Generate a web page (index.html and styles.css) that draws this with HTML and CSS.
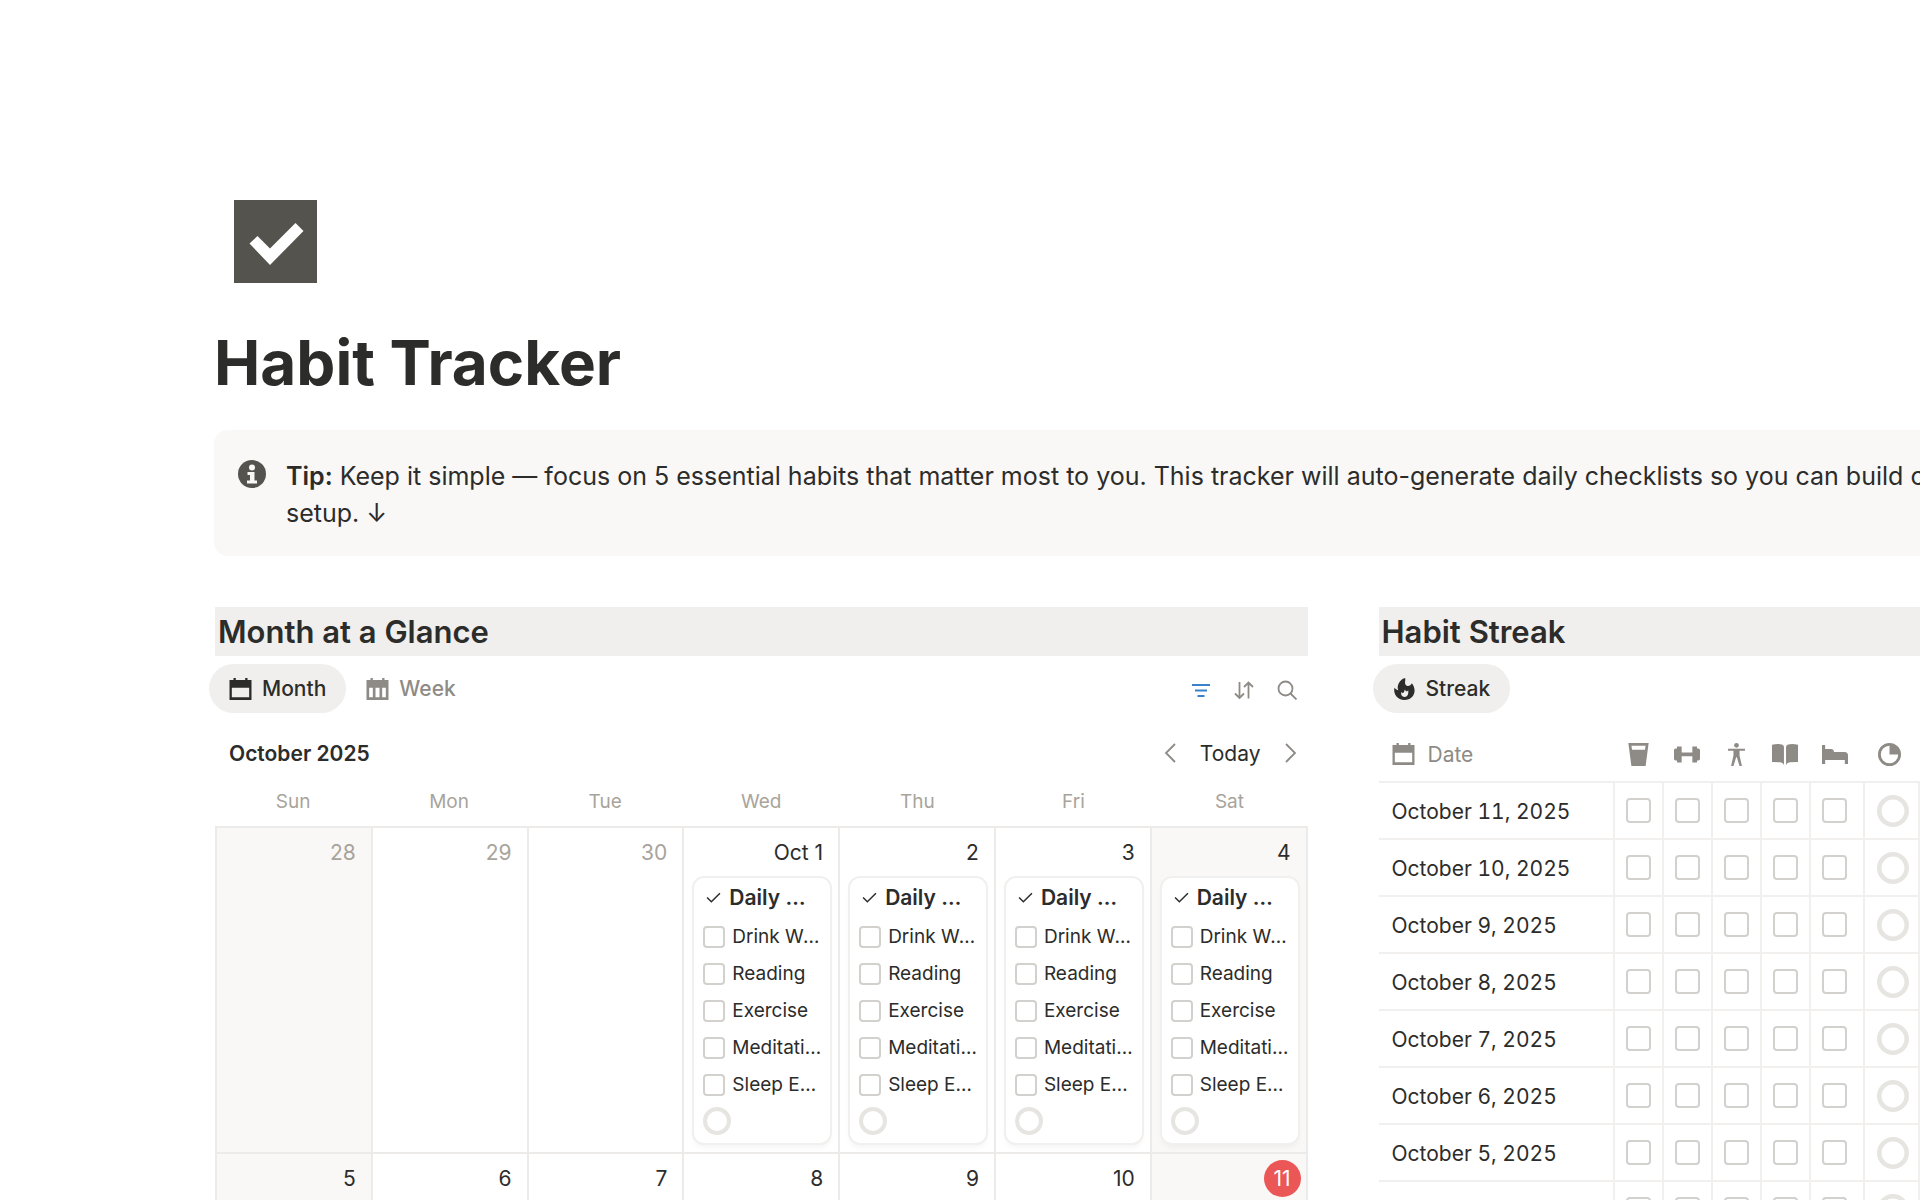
FILE: index.html
```html
<!DOCTYPE html>
<html lang="en">
<head>
    <meta charset="UTF-8">
    <meta name="viewport" content="width=device-width, initial-scale=1.0">
    <title>Habit Tracker</title>
    <link rel="stylesheet" href="styles.css">
</head>
<body>
<svg class="sprite" aria-hidden="true">
    <symbol id="i-month" viewBox="0 0 66 66">
        <path fill-rule="evenodd" d="M12 0h7v6h28V0h7v6h12v60H0V6h12zM7 29v29h52V29z"/>
    </symbol>
    <symbol id="i-week" viewBox="0 0 66 66">
        <path fill-rule="evenodd" d="M12 0h7v6h28V0h7v6h12v60H0V6h12zM8 29v29h11V29zM27 29v29h12V29zM47 29v29h11V29z"/>
    </symbol>
    <symbol id="i-fire" viewBox="0 0 68 72">
        <path fill-rule="evenodd" d="M36 0C24 3 14 14 12 28C11 33 12 37 14 40C9 39 6 37 1 32C-1 42 1 52 7 60C13 68 23 72 34 72C53 72 67 59 67 41C67 31 63 24 58 17C56 22 51 26 45 26C40 26 37 23 36 18C35 12 38 6 36 0zM36 38C37 43 39 45 43 43C44 42 45 41 46 40C48 52 44 62 34 62C26 62 21 55 24 46C27 50 30 50 32 47C34 44 33 40 36 38z"/>
    </symbol>
    <symbol id="i-cup" viewBox="0 0 60 68">
        <path fill-rule="evenodd" d="M0 0h60l-9 68H9zM9 8l2 12h38l2-12z"/>
    </symbol>
    <symbol id="i-dumbbell" viewBox="0 0 78 52">
        <path d="M9 2h14v18h32V2h14v6h4a5 5 0 0 1 5 5v26a5 5 0 0 1-5 5h-4v6H55V31H23v19H9v-6H5a5 5 0 0 1-5-5V13a5 5 0 0 1 5-5h4z"/>
    </symbol>
    <symbol id="i-person" viewBox="0 0 50 68">
        <circle cx="25" cy="7" r="7"/>
        <path d="M0 17h50v6H34v14l7 31h-7l-8-26h-2l-8 26H9l7-31V23H0z"/>
    </symbol>
    <symbol id="i-book" viewBox="0 0 74 60">
        <path d="M0 2Q18-2 30 2Q34 4 34 8V60Q32 54 24 52L0 51zM74 2Q56-2 44 2Q40 4 40 8V60Q42 54 50 52L74 51z"/>
    </symbol>
    <symbol id="i-bed" viewBox="0 0 74 54">
        <path d="M0 0h9v11h16q9 0 9 9h30q10 0 10 10v24h-9V43H9v11H0z"/>
    </symbol>
    <symbol id="i-pie" viewBox="0 0 66 66">
        <path fill-rule="evenodd" d="M33 0a33 33 0 1 0 0 66a33 33 0 0 0 0-66zM33 8v25h25a25 25 0 1 1-25-25z"/>
    </symbol>
    <symbol id="i-check" viewBox="0 0 14 10">
        <path d="M1 5l4 4 8-8" fill="none" stroke="currentColor" stroke-width="1.4"/>
    </symbol>
    <symbol id="i-ring" viewBox="0 0 28 28">
        <circle cx="14" cy="14" r="12" fill="none" stroke="currentColor" stroke-width="4"/>
    </symbol>
</svg>

<main class="page">
    <svg class="page-icon" viewBox="0 0 83 83">
        <path fill="#55534d" d="M0 0h83v83H0z"/>
        <path fill="#fff" d="M15.500 43.500L23.500 36L36 48.500L61.500 23L69.500 31L36 65z"/>
    </svg>
    <h1 class="page-title">Habit Tracker</h1>

    <div class="callout">
        <svg class="callout-icon" viewBox="0 0 28 28">
            <circle cx="14" cy="14" r="14" fill="#55534d"/>
            <circle cx="14" cy="7.500" r="3" fill="#f9f8f7"/>
            <path fill="#f9f8f7" d="M9.500 12h7v8.500h2.500v3H9v-3h3V15H9.500z"/>
        </svg>
        <p class="callout-text"><strong>Tip:</strong> Keep it simple — focus on 5 essential habits that matter most to you. This tracker will auto-generate daily checklists so you can build consistency without overwhelm or complex setup. ↓</p>
    </div>

    <div class="columns">
        <section>
            <h2 class="section-title">Month at a Glance</h2>
            <div class="view-bar">
                <button type="button" class="tab active"><svg class="tab-icon"><use href="#i-month"/></svg>Month</button>
                <button type="button" class="tab"><svg class="tab-icon"><use href="#i-week"/></svg>Week</button>
                <div class="tools">
                    <button type="button" class="icon-btn filter" aria-label="Filter">
                        <svg viewBox="0 0 20 20"><path d="M1 5h18M4 10.500h12M6.500 16h7" stroke-width="2"/></svg>
                    </button>
                    <button type="button" class="icon-btn" aria-label="Sort">
                        <svg viewBox="0 0 20 20"><path d="M5.500 2v16M1 13.500l4.500 4.500 4.500-4.500M14.500 18.500V2.500M10 7l4.500-4.500L19 7"/></svg>
                    </button>
                    <button type="button" class="icon-btn" aria-label="Search">
                        <svg viewBox="0 0 20 20"><circle cx="8.500" cy="8.500" r="7"/><path d="M13.500 13.500l6 6"/></svg>
                    </button>
                </div>
            </div>

            <div class="month-bar">
                <span class="month-name">October 2025</span>
                <button type="button" class="icon-btn" aria-label="Previous month">
                    <svg viewBox="0 0 20 20"><path d="M15 1L6 10l9 9"/></svg>
                </button>
                <button type="button" class="today-btn">Today</button>
                <button type="button" class="icon-btn" aria-label="Next month">
                    <svg viewBox="0 0 20 20"><path d="M5 1l9 9-9 9"/></svg>
                </button>
            </div>
            <div class="weekdays">
                <span>Sun</span><span>Mon</span><span>Tue</span><span>Wed</span><span>Thu</span><span>Fri</span><span>Sat</span>
            </div>
            <div class="calendar" id="calendar"></div>
        </section>

        <section>
            <h2 class="section-title">Habit Streak</h2>
            <div class="view-bar">
                <button type="button" class="tab active"><svg class="tab-icon"><use href="#i-fire"/></svg>Streak</button>
            </div>
            <table class="streak">
                <thead>
                <tr>
                    <th class="date-col"><span class="date-head"><svg class="tab-icon"><use href="#i-month"/></svg>Date</span></th>
                    <th class="check-col"><svg class="head-icon" aria-label="Drink Water"><use href="#i-cup"/></svg></th>
                    <th class="check-col"><svg class="head-icon wide" aria-label="Exercise"><use href="#i-dumbbell"/></svg></th>
                    <th class="check-col"><svg class="head-icon" aria-label="Meditation"><use href="#i-person"/></svg></th>
                    <th class="check-col"><svg class="head-icon wide" aria-label="Reading"><use href="#i-book"/></svg></th>
                    <th class="check-col last"><svg class="head-icon wide" aria-label="Sleep Early"><use href="#i-bed"/></svg></th>
                    <th class="ring-col"><svg class="head-icon" aria-label="Progress"><use href="#i-pie"/></svg></th>
                    <th></th>
                </tr>
                </thead>
                <tbody id="streak-rows"></tbody>
            </table>
        </section>
    </div>
</main>
<script src="script.js"></script>
</body>
</html>
```
FILE: styles.css
```css
* {
    box-sizing: border-box;
}

body {
    margin: 0;
    overflow-x: hidden;
    background: #fff;
    color: #2c2c2b;
    font-family: Inter, "Liberation Sans", sans-serif;
    font-size: 21px;
}

h1, h2, p {
    margin: 0;
}

button {
    padding: 0;
    border: none;
    background: none;
    color: inherit;
    font: inherit;
    cursor: pointer;
}

svg {
    display: block;
    flex: none;
    fill: currentColor;
}

.sprite {
    position: absolute;
    width: 0;
    height: 0;
}

/* wide board, runs past the right edge of the window */
.page {
    width: 140vw;
    padding: 200px 214px 0;
}

.page-icon {
    width: 83px;
    height: 83px;
    margin-left: 20px;
}

.page-title {
    margin: 43px 0 31px;
    font-size: 62px;
    font-weight: 700;
    line-height: 73px;
}

.callout {
    display: flex;
    gap: 20px;
    padding: 28px 24px 24px;
    border-radius: 14px;
    background: #f9f8f7;
}

.callout-icon {
    width: 28px;
    height: 28px;
    margin-top: 2px;
}

.callout-text {
    font-size: 25px;
    line-height: 37px;
}

.callout-text strong {
    font-weight: 600;
}

.columns {
    display: grid;
    grid-template-columns: 1fr 1fr;
    gap: 71px;
    margin-top: 51px;
    padding: 0 3px 0 1px;
}

.section-title {
    padding: 1px 3px 0;
    background: #f0efed;
    font-size: 31px;
    font-weight: 600;
    line-height: 48px;
}

.view-bar {
    display: flex;
    align-items: center;
    margin: 8px 0 0 -6px;
}

.tab {
    display: flex;
    align-items: center;
    gap: 10px;
    height: 49px;
    padding: 0 20px;
    border-radius: 25px;
    color: #8e8b86;
    font-weight: 500;
}

.tab.active {
    background: #f0efed;
    color: #2c2c2b;
}

.tab-icon {
    width: 23px;
    height: 22px;
}

.tools {
    display: flex;
    gap: 23px;
    margin-left: auto;
    padding: 2px 11px 0 0;
}

.icon-btn {
    color: #8e8b86;
}

.icon-btn svg {
    width: 20px;
    height: 20px;
    fill: none;
    stroke: currentColor;
    stroke-width: 1.8;
}

.filter {
    color: #3b82cc;
}

.month-bar {
    display: flex;
    align-items: center;
    height: 50px;
    margin-top: 15px;
    padding: 0 7px 0 14px;
}

.month-name {
    margin-right: auto;
    font-weight: 600;
}

.today-btn {
    margin: 0 20px;
}

.weekdays {
    display: grid;
    grid-template-columns: repeat(7, 1fr);
    color: #a8a49c;
    font-size: 19px;
    line-height: 48px;
    text-align: center;
}

.calendar {
    display: grid;
    grid-template-columns: repeat(7, minmax(0, 1fr));
    border-top: 2px solid #ecebe9;
    border-left: 2px solid #ecebe9;
}

.day {
    min-height: 326px;
    padding: 6px 5px 8px;
    border-right: 2px solid #ecebe9;
    border-bottom: 2px solid #ecebe9;
}

.day.weekend {
    background: #f9f8f7;
}

.day-num {
    display: block;
    width: fit-content;
    min-width: 37px;
    margin-left: auto;
    padding-right: 10px;
    line-height: 37px;
    text-align: right;
}

.day.outside .day-num {
    color: #a8a49c;
}

.day.today .day-num {
    padding: 0;
    border-radius: 50%;
    background: #eb5757;
    color: #fff;
    text-align: center;
}

.card {
    margin: 7px 3px 0 5px;
    padding: 1px 6px 8px 9px;
    border-radius: 10px;
    background: #fff;
    box-shadow: 0 0 0 2px #f1f0ee, 0 4px 6px rgba(0, 0, 0, 0.05);
}

.card-title {
    display: flex;
    align-items: center;
    gap: 8px;
    margin-bottom: 2px;
    padding: 0 12px 0 3px;
    font-weight: 600;
    line-height: 37px;
}

.card-title svg {
    width: 15px;
    height: 11px;
}

.card-title span,
.habit span {
    overflow: hidden;
    text-overflow: ellipsis;
    white-space: nowrap;
}

.habit {
    display: flex;
    align-items: center;
    gap: 7px;
    font-size: 19px;
    line-height: 37px;
}

input[type="checkbox"] {
    appearance: none;
    flex: none;
    width: 22px;
    height: 22px;
    margin: 0;
    border: 2px solid #d3d1ce;
    border-radius: 4px;
    background: #fff;
}

input[type="checkbox"]:checked {
    border-color: #3b82cc;
    background: #3b82cc;
}

.ring {
    width: 28px;
    height: 28px;
    margin-top: 4px;
    color: #e6e5e1;
}

.streak {
    width: 100%;
    margin-top: 12px;
    border-collapse: collapse;
    table-layout: fixed;
}

.streak th,
.streak td {
    height: 57px;
    padding: 0;
    border-bottom: 2px solid #f1f0ee;
}

.streak th {
    padding-top: 2px;
    color: #8e8b86;
    font-weight: 400;
}

.streak td + td {
    border-left: 2px solid #f1f0ee;
}

.streak td:first-child,
.streak th:first-child {
    padding: 2px 0 0 13px;
    text-align: left;
    font-variant-numeric: tabular-nums;
}

.streak .last {
    padding-right: 4px;
}

.streak input[type="checkbox"] {
    display: block;
    width: 25px;
    height: 25px;
    margin: 0 auto;
}

.streak .ring {
    width: 32px;
    height: 32px;
    margin: 0 auto;
}

.streak .ring-cell {
    padding-left: 3px;
}

.date-head {
    display: flex;
    align-items: center;
    gap: 13px;
}

.head-icon {
    width: 23px;
    height: 23px;
    margin: 0 auto;
}

.head-icon.wide {
    width: 26px;
}

.date-col {
    width: 235px;
}

.check-col {
    width: 49px;
}

.check-col.last {
    width: 54px;
}

.streak .ring-col {
    width: 55px;
    padding-right: 3px;
}
```
FILE: script.js
```javascript
const habits = ["Drink Water", "Reading", "Exercise", "Meditation", "Sleep Early"];
const days = ["28", "29", "30", "Oct 1", "2", "3", "4", "5", "6", "7", "8", "9", "10", "11"];
const ring = '<svg class="ring"><use href="#i-ring"/></svg>';

function card() {
    const items = habits.map(h => `<label class="habit"><input type="checkbox"><span>${h}</span></label>`).join("");
    return `<div class="card">
        <div class="card-title"><svg><use href="#i-check"/></svg><span>Daily Checklist</span></div>
        ${items}${ring}
    </div>`;
}

document.getElementById("calendar").innerHTML = days.map((day, i) => {
    let cls = "day";
    if (i % 7 === 0 || i % 7 === 6) cls += " weekend";
    if (i < 3) cls += " outside";
    if (day === "11") cls += " today";
    return `<div class="${cls}"><span class="day-num">${day}</span>${i < 3 ? "" : card()}</div>`;
}).join("");

let rows = "";
for (let d = 11; d > 0; d--) {
    const date = `October ${d}, 2025`;
    const boxes = habits.map((h, i) => {
        const cls = i === habits.length - 1 ? ' class="last"' : "";
        return `<td${cls}><input type="checkbox" aria-label="${h}, ${date}"></td>`;
    }).join("");
    rows += `<tr><td>${date}</td>${boxes}<td class="ring-cell">${ring}</td><td></td></tr>`;
}
document.getElementById("streak-rows").innerHTML = rows;
```
